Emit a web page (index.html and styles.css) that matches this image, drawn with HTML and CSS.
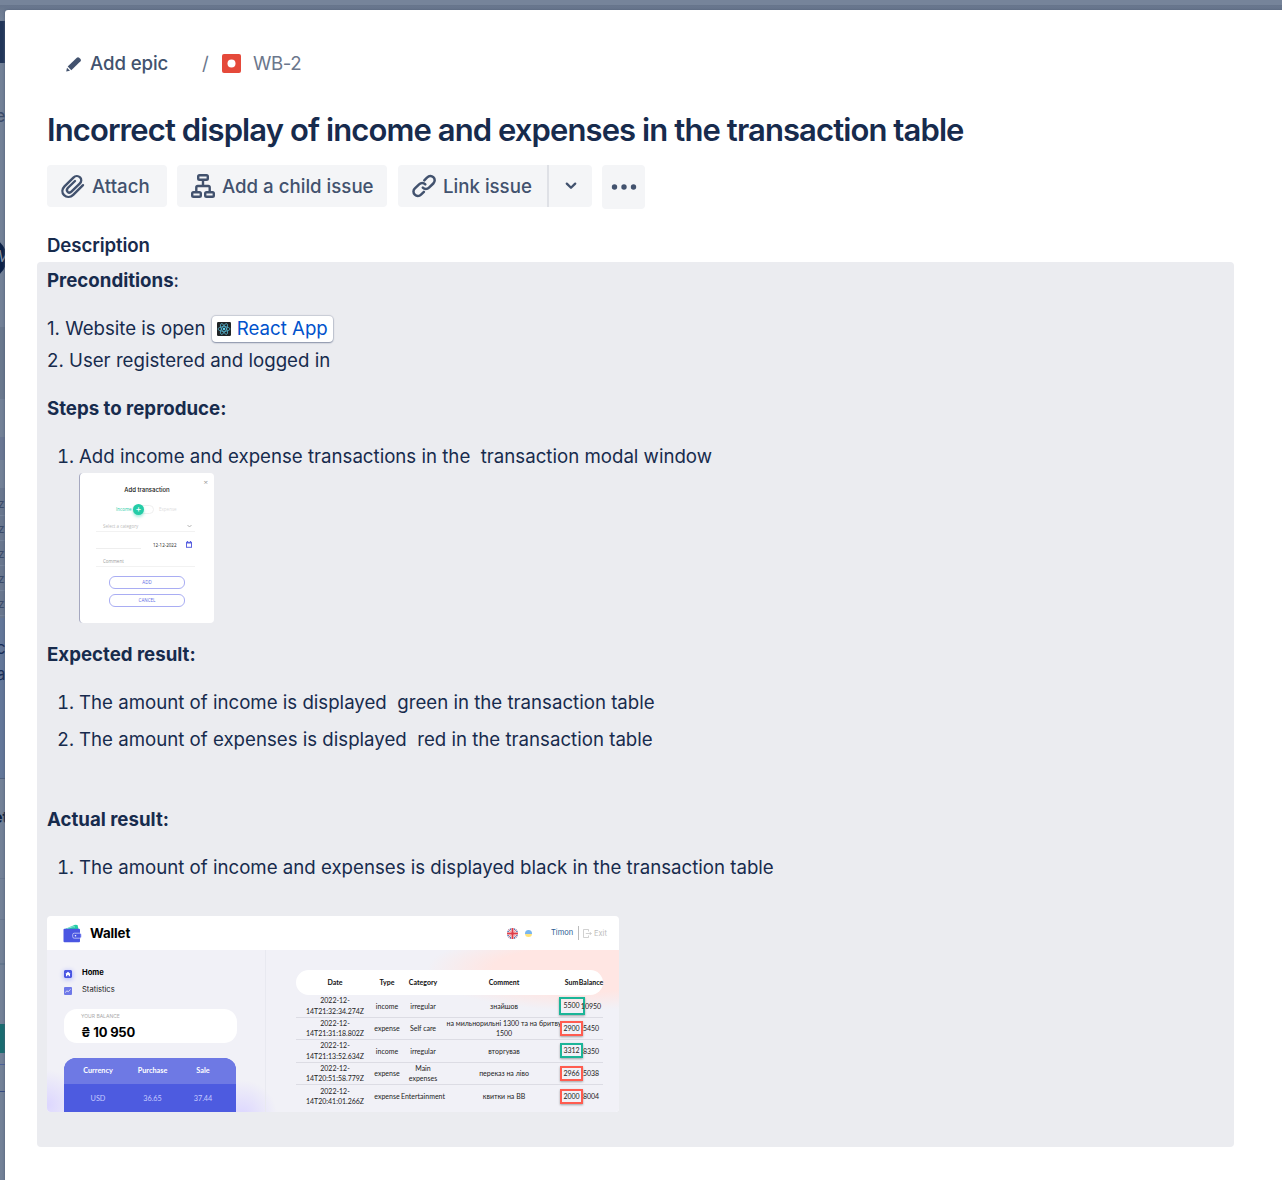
FILE: index.html
```
<!DOCTYPE html>
<html lang="en">
<head>
<meta charset="utf-8">
<title>WB-2</title>
<link rel="stylesheet" href="styles.css">
</head>
<body>
<div class="board">
  <div class="seg s-top"></div><div class="seg s-nav"></div><div class="seg s-a"><span class="frag f-e">e</span></div>
  <div class="seg s-avatar"><i class="avatar"><b>M</b></i></div><div class="seg s-b"></div><div class="seg s-c"></div><div class="seg s-d"></div><div class="seg s-e"></div><div class="seg s-f"></div>
  <div class="seg s-z"><span>z</span><span>z</span><span>z</span><span>z</span><span>z</span></div>
  <div class="seg s-blue"><span>c</span><span>a</span></div>
  <div class="seg s-g"><span class="frag f-et">et</span></div><div class="seg s-h"></div><div class="seg s-i"></div><div class="seg s-j"></div><div class="seg s-teal"></div><div class="seg s-k"></div><div class="seg s-l"></div><div class="seg s-m"></div>
</div>
<main class="modal">
  <nav class="crumbs">
    <svg class="pencil" width="18" height="18" viewBox="0 0 18 18"><path d="M1.2 16.6 2 12.7 5 15.8z" fill="#42526e"/><path d="M2.7 11.6 11.8 2.7Q13 1.6 14.2 2.7L15.5 4Q16.6 5.2 15.5 6.3L6.3 15.2z" fill="#42526e"/></svg>
    <span class="add-epic">Add epic</span><span class="slash">/</span>
    <svg class="bug" width="19" height="19" viewBox="0 0 19 19"><rect width="19" height="19" rx="2" fill="#e5493a"/><circle cx="9.5" cy="9.5" r="4" fill="#fff"/></svg>
    <span class="key">WB-2</span>
  </nav>
  <h1>Incorrect display of income and expenses in the transaction table</h1>
  <div class="actions">
    <button class="btn attach"><svg width="26" height="26" viewBox="0 0 26 26" fill="none" stroke="#42526e" stroke-width="2.4" stroke-linecap="round"><path d="M23 12.2 13.2 21.8C10.500 24.400 6.600 24.600 4.100 22.200 1.700 19.700 1.900 16 4.500 13.300L13.400 4.600C15.300 2.700 18.200 2.600 20 4.300 21.700 6.100 21.600 8.700 19.700 10.600L11.400 18.600C10.200 19.800 8.700 19.800 7.600 18.800 6.600 17.700 6.700 16.200 7.800 15L15 8"/></svg><span>Attach</span></button>
    <button class="btn child"><svg width="26" height="26" viewBox="0 0 26 26" fill="none" stroke="#42526e" stroke-width="2.4"><rect x="8.200" y="2.200" width="9.600" height="4.600" rx="1.300"/><rect x="2.200" y="19.300" width="8.600" height="4.500" rx="1.300"/><rect x="15.200" y="19.300" width="8.600" height="4.500" rx="1.300"/><path d="M13 7v6M6.300 19v-4.500q0-1.500 1.500-1.500h10.400q1.500 0 1.500 1.500V19"/></svg><span>Add a child issue</span></button>
    <div class="split">
      <button class="btn link"><svg width="26" height="26" viewBox="0 0 26 26" fill="none" stroke="#42526e" stroke-width="2.5" stroke-linecap="round"><path d="M13.300 7.400 16.200 4.500C18 2.600 20.500 2.500 22.300 4.200 24.200 6 24.100 8.700 22.300 10.500L18 14.700C16.200 16.500 13.500 16.500 11.800 14.700"/><path d="M12.900 18.800 10 21.600C8.200 23.400 5.600 23.500 3.800 21.700 2 19.900 2 17.200 3.900 15.400L8.100 11.300C9.900 9.500 12.600 9.500 14.300 11.300"/></svg><span>Link issue</span></button>
      <button class="btn drop"><svg width="14" height="10" viewBox="0 0 14 10" fill="none" stroke="#42526e" stroke-width="2.3" stroke-linecap="round" stroke-linejoin="round"><path d="M2.800 2.600 7 6.800 11.200 2.600"/></svg></button>
    </div>
    <button class="btn more"><svg width="26" height="6" viewBox="0 0 26 6" fill="#42526e"><circle cx="3.500" cy="3" r="2.700"/><circle cx="13" cy="3" r="2.700"/><circle cx="22.500" cy="3" r="2.700"/></svg></button>
  </div>
  <h2>Description</h2>
  <section class="panel">
    <p><strong class="w-pre">Preconditions</strong>:</p>
    <p><span class="w-site">1. Website is open</span> <a class="card"><svg width="18" height="18" viewBox="0 0 18 18"><rect width="18" height="18" rx="1.500" fill="#202426"/><g fill="none" stroke="#61dafb" stroke-width=".75"><ellipse cx="9" cy="9" rx="7.700" ry="3"/><ellipse cx="9" cy="9" rx="7.700" ry="3" transform="rotate(60 9 9)"/><ellipse cx="9" cy="9" rx="7.700" ry="3" transform="rotate(120 9 9)"/></g><circle cx="9" cy="9" r="1.500" fill="#61dafb"/></svg><span>React App</span></a><br><span class="w-user">2. User registered and logged in</span></p>
    <p><strong class="w-steps">Steps to reproduce:</strong></p>
    <ol>
      <li><span class="w-add">Add income and expense transactions in the&nbsp; transaction modal window</span>
        <div class="form-shot">
          <div class="fs-close">×</div>
          <div class="fs-title">Add transaction</div>
          <div class="fs-toggle"><span class="fs-inc">Income</span><span class="fs-pill"><i>+</i></span><span class="fs-exp">Expense</span></div>
          <div class="fs-field fs-cat"><span>Select a category</span><svg width="5" height="4" viewBox="0 0 5 4" fill="none" stroke="#999" stroke-width=".7"><path d="M.5 1 2.500 3 4.500 1"/></svg></div>
          <div class="fs-date"><span class="fs-amt"></span><span class="fs-day">12-12-2022</span><svg width="6" height="7" viewBox="0 0 6 7"><rect x=".5" y="1.300" width="5" height="5" fill="none" stroke="#5b62e0"/><path d="M0 1h6v1.600H0zM1 0h1v1H1zM4 0h1v1H4z" fill="#5b62e0"/></svg></div>
          <div class="fs-field fs-com"><span>Comment</span></div>
          <div class="fs-btn">ADD</div><div class="fs-btn">CANCEL</div>
        </div>
      </li>
    </ol>
    <p><strong class="w-exp">Expected result:</strong></p>
    <ol>
      <li><span class="w-green">The amount of income is displayed&nbsp; green in the transaction table</span></li>
      <li><span class="w-red">The amount of expenses is displayed&nbsp; red in the transaction table</span></li>
    </ol>
    <p class="actual"><strong class="w-act">Actual result:</strong></p>
    <ol>
      <li><span class="w-black">The amount of income and expenses is displayed black in the transaction table</span></li>
    </ol>
    <div class="wallet">
      <header class="w-head">
        <svg class="w-logo" width="19" height="19" viewBox="0 0 19 19"><path d="M2 5 12 .8 14.500 1l1 4z" fill="#24cca7"/><path d="M4 4.500 10 2.700 12 3" stroke="#fff" stroke-width=".5" fill="none"/><rect x=".5" y="4.700" width="16.500" height="13.600" rx="1" fill="#4a56e2"/><rect x="9.700" y="9.200" width="8.500" height="5" rx="1.500" fill="#4a56e2" stroke="#dfe2ff" stroke-width=".7"/><circle cx="12.500" cy="11.700" r=".8" fill="#fff"/></svg>
        <b class="w-name">Wallet</b>
        <svg class="uk" width="11" height="11" viewBox="0 0 12 12"><defs><clipPath id="r"><circle cx="6" cy="6" r="6"/></clipPath></defs><g clip-path="url(#r)"><path fill="#3558a0" d="M0 0h12v12H0z"/><path d="m0 0 12 12M12 0 0 12" stroke="#fff" stroke-width="2"/><path d="m0 0 12 12M12 0 0 12" stroke="#df3c48" stroke-width=".8"/><path d="M6 0v12M0 6h12" stroke="#fff" stroke-width="3.600"/><path d="M6 0v12M0 6h12" stroke="#df3c48" stroke-width="2.200"/></g></svg>
        <i class="ua"></i><span class="user">Timon</span>
        <svg class="out" width="9" height="9" viewBox="0 0 9 9" fill="none" stroke="#bdbdbd" stroke-width=".7"><path d="M5.500 2.500V.5h-5v8h5v-2M2.800 4.500h5.500M6.800 3l1.500 1.500L6.800 6"/></svg><span class="exit">Exit</span>
      </header>
      <div class="w-body">
        <aside>
          <div class="nav-i home"><svg width="8" height="8" viewBox="0 0 8 8"><rect width="8" height="8" rx="1" fill="#4a56e2"/><path d="M4 1.700 6.600 4H6v2.200H4.700V4.900H3.300v1.300H2V4h-.6z" fill="#fff"/></svg><span>Home</span></div>
          <div class="nav-i stat"><svg width="8" height="8" viewBox="0 0 8 8"><rect width="8" height="8" rx="1" fill="#6e78e8"/><path d="m1.300 5.700 1.500-1.900 1.400.9 2.400-2.400" stroke="#fff" stroke-width=".7" fill="none"/></svg><span>Statistics</span></div>
          <div class="balance"><small>YOUR BALANCE</small><b>₴ 10 950</b></div>
          <div class="rates"><div class="r-head"><span>Currency</span><span>Purchase</span><span>Sale</span></div><div class="r-row"><span>USD</span><span>36.65</span><span>37.44</span></div></div>
        </aside>
        <div class="tx">
          <div class="row th"><span>Date</span><span>Type</span><span>Category</span><span>Comment</span><span>Sum</span><span>Balance</span></div>
          <div class="row"><span>2022-12-<br>14T21:32:34.274Z</span><span>income</span><span>irregular</span><span>знайшов</span><span class="in big">5500</span><span>10950</span></div>
          <div class="row"><span>2022-12-<br>14T21:31:18.802Z</span><span>expense</span><span>Self care</span><span class="long">на мильнорильні 1300 та на бритву<br>1500</span><span class="ex">2900</span><span>5450</span></div>
          <div class="row"><span>2022-12-<br>14T21:13:52.634Z</span><span>income</span><span>irregular</span><span>вторгував</span><span class="in">3312</span><span>8350</span></div>
          <div class="row"><span>2022-12-<br>14T20:51:58.779Z</span><span>expense</span><span>Main<br>expenses</span><span>переказ на ліво</span><span class="ex">2966</span><span>5038</span></div>
          <div class="row last"><span>2022-12-<br>14T20:41:01.266Z</span><span>expense</span><span>Entertainment</span><span>квитки на ВВ</span><span class="ex">2000</span><span>8004</span></div>
        </div>
      </div>
    </div>
  </section>
</main>
</body>
</html>
```
FILE: styles.css
```
*{box-sizing:border-box}
body{margin:0;width:1282px;height:1180px;overflow:hidden;position:relative;background:#748298;font-family:Inter,"Noto Sans",sans-serif;color:#172b4d}
.board{position:absolute;inset:0;overflow:hidden;display:flex;flex-direction:column;color:#3b4b6a}
.seg{flex:none;position:relative;width:100%;background:#738197}
.frag{position:absolute}
.s-top{height:21px;background:linear-gradient(#76849a 5px,#67758c 5px,#6c7a90 10px,#748298 21px)}
.s-nav{height:42px;background:#213559}
.s-a{height:174px}
.f-e{left:-5px;top:42px;font-size:18px;line-height:22px}
.s-avatar{height:42px}
.avatar{position:absolute;left:-37px;top:0;width:42px;height:42px;border-radius:50%;background:#0c2147;box-shadow:2px 0 #0c2147}
.avatar b{position:absolute;right:-5px;top:10px;font:italic 17px "Liberation Sans",sans-serif;color:#8794a8}
.s-b{height:48px}
.s-c{height:72px;background:#6a788d}
.s-d{height:38px}
.s-e{height:23px;background:#6a7793}
.s-f{height:28px}
.s-z{height:130px;background:#69778e;padding-top:3px}
.s-z span{display:block;height:25px;border-bottom:1px solid #75839a;font-size:12px;line-height:26px;margin-left:-2px}
.s-blue{height:161px;background:#637799;border-bottom:1px solid #51617d;padding-top:17px}
.s-blue span{display:block;font-size:17px;line-height:26px;margin-left:-4px;color:#172c58}
.s-g{height:100px;border-bottom:1px solid #69778e}
.f-et{left:-7px;top:28px;font-size:16px;line-height:20px;font-weight:700;color:#0d1d3c}
.s-h{height:41px;border-bottom:1px solid #69778e}
.s-i{height:45px;border-bottom:2px solid #65788e}
.s-j{height:59px}
.s-teal{height:29px;background:#196c70}
.s-k{height:12px;border-bottom:1px solid #4c619a}
.s-l{height:27px;border-bottom:1px solid #344a82}
.s-m{height:89px}
.modal{position:absolute;left:5px;top:10px;width:1290px;height:1180px;background:#fff;border-radius:3px 0 0 0;padding:37px 0 0 42px;box-shadow:0 0 3px #4c5b75}
.crumbs{display:flex;align-items:center;height:33px;padding-left:18px;font-size:18.67px;white-space:nowrap}
.add-epic{font-weight:500;color:#42526e;margin-left:7px;width:112px;letter-spacing:-.1px}
.slash{color:#6b778c;width:20px}
.bug{flex:none}
.key{margin-left:12px;color:#6b778c;letter-spacing:-.4px}
h1{margin:30px 0 0;height:40px;line-height:40px;font-size:31px;font-weight:600;letter-spacing:-.9px;white-space:nowrap}
.actions{display:flex;margin-top:15px;height:44px;align-items:flex-start}
.btn{border:0;background:#f4f5f7;border-radius:4px;height:42px;padding:0 0 0 13px;display:flex;align-items:center;font:500 18.67px Inter,sans-serif;color:#42526e;white-space:nowrap}
.btn span{margin-left:6px}
.attach{width:120px;margin-right:10px}
.child{width:210px;margin-right:11px}
.split{display:flex;width:194px;margin-right:10px}
.link{width:151px;border-radius:4px 0 0 4px;border-right:2px solid #dfe1e6}
.drop{width:43px;border-radius:0 4px 4px 0;padding:0;justify-content:center}
.more{width:43px;height:44px;padding:0;justify-content:center}
h2{margin:21px 0 0;height:32px;line-height:32px;font-size:18.67px;font-weight:600;letter-spacing:-.1px}
.panel{margin-left:-10px;width:1197px;height:885px;background:#ebecf0;border-radius:4px;padding:3px 10px;font-size:18.67px;line-height:32px}
p{margin:0 0 16px;white-space:nowrap}
strong{font-weight:700}
ol{margin:0 0 16px;padding:0 0 0 32px;white-space:nowrap}
li+li{margin-top:5px}
.card{display:inline-flex;align-items:center;vertical-align:top;background:#fff;border-radius:4px;height:26px;margin:3px 0 0 1px;padding:0 5px;line-height:26px;width:121px;color:#0052cc;box-shadow:0 1px 1.500px #8c95aa,0 0 1px 1px #c9ccd6}
.card span{margin-left:6px}
.actual{margin-top:48px}
.form-shot{width:135px;height:150px;background:#fff;border-radius:4px;border-left:1px solid #a5a8c0;padding:5px 19px 0 16px;font-family:"Open Sans",sans-serif;font-size:4.500px;line-height:6px;color:#999;display:flex;flex-direction:column}
.fs-close{align-self:flex-end;margin-right:-13px;font-size:8px;height:7px;line-height:7px}
.fs-title{height:9px;line-height:9px;text-align:center;font:500 6px/9px Inter,sans-serif;color:#111;margin-left:3px}
.fs-toggle{display:flex;align-items:center;height:12px;margin-top:9px;padding-left:20px}
.fs-inc{color:#24cca7;width:16px}
.fs-pill{width:22px;height:9px;border:1px solid #f0f0f0;border-radius:6px;display:flex;align-items:center;margin-right:5px}
.fs-pill i{flex:none;width:11px;height:11px;border-radius:50%;background:#24cca7;color:#fff;text-align:center;font:9px/10px Inter,sans-serif;box-shadow:0 2px 3px #24cca766}
.fs-exp{color:#ddd}
.fs-field{display:flex;align-items:center;justify-content:space-between;border-bottom:1px solid #f2f2f2;height:11px;padding:0 3px 0 7px}
.fs-cat{margin-top:6px;color:#bbb}
.fs-date{display:flex;align-items:center;height:11px;margin-top:7px;padding-right:3px}
.fs-amt{width:45px;height:9px;border-bottom:1px solid #eee;margin-right:12px}
.fs-day{flex:1;color:#222}
.fs-com{margin-top:6px}
.fs-btn{width:76px;height:13px;margin:9px 0 0 13px;border:1px solid #a9adf3;border-radius:6px;text-align:center;color:#6269e5;line-height:11px}
.fs-btn+.fs-btn{margin-top:5px}
.wallet{width:572px;height:196px;margin-top:32px;border-radius:4px;overflow:hidden;background:#fff;font-family:Lato,"Noto Sans",sans-serif;font-size:7px;line-height:10.400px;color:#222}
.w-head{height:34px;display:flex;align-items:center;padding-left:16px}
.w-name{margin-left:8px;font:700 13.300px Inter,sans-serif;color:#000;width:370px;margin-right:auto;letter-spacing:-.1px}
.uk{flex:none;margin-right:7px}
.ua{width:7px;height:7px;border-radius:50%;background:linear-gradient(#79b6ee 50%,#ffe37b 50%);margin-right:19px}
.user{color:#2a5b92;font:7.500px Inter,sans-serif;width:28px;border-right:1px solid #bbb;height:14px;line-height:14px}
.out{margin:0 2px 0 4px}
.exit{color:#bdbdbd;width:25px;font:7.500px Inter,sans-serif}
.w-body{height:162px;display:flex;background:radial-gradient(circle at 0 155px,#dcd6ff 0,#dcd6ff00 35px),radial-gradient(circle at 195px 165px,#dcd6ff 0,#dcd6ff00 35px),radial-gradient(ellipse at 530px 20px,#ffe6e3 0,#ffe6e3 85px,#ffe6e300 150px),#f1f1f7}
aside{width:219px;padding:18px 0 0 17px;border-right:1px solid #e8e9f0;font-family:Inter,sans-serif}
.nav-i{display:flex;align-items:center;gap:10px;height:11px;font-size:7.600px;color:#222}
.home{font-weight:700;color:#000}
.home svg{box-shadow:0 1px 5px #9da5ff;border-radius:1px}
.stat{margin-top:6px}
.balance{width:173px;height:34px;margin-top:13px;background:#fff;border-radius:13px;padding:3px 0 0 17px}
.balance small{display:block;font-size:5px;line-height:8px;color:#aaa}
.balance b{display:block;font-size:13px;line-height:18px;margin-top:3px;color:#000;letter-spacing:-.2px}
.rates{width:172px;height:54px;margin-top:15px;background:#4d5be0;border-radius:12px 12px 0 0;overflow:hidden;color:#c5caff;font-family:Lato,sans-serif;font-size:7.300px}
.r-head,.r-row{display:grid;grid-template-columns:64px 45px 56px;height:26px;align-items:center;text-align:center;padding-left:2px}
.r-head{background:#6e79e4;color:#fff;font-weight:700}
.r-row{height:30px}
.tx{padding:20px 0 0 30px;width:337px}
.row{display:grid;grid-template-columns:78px 26px 46px 116px 19px 20px;width:307px;height:22.500px;align-items:center;border-bottom:1px solid #dcdce4;padding-right:2px;white-space:nowrap}
.row>span{justify-self:center;text-align:center}
.th{height:25px;background:#fff;border:0;border-radius:13px;font-weight:700;color:#111}
.row>.in,.row>.ex{width:23px;height:15px;border:2.500px solid #ff5c50;line-height:10px;margin:0 -3px;box-shadow:0 1px 2px #0005}
.row>.in{border-color:#1bb598}
.row>.big{width:26px;height:18px;line-height:13px}
.last{border:0}
```
